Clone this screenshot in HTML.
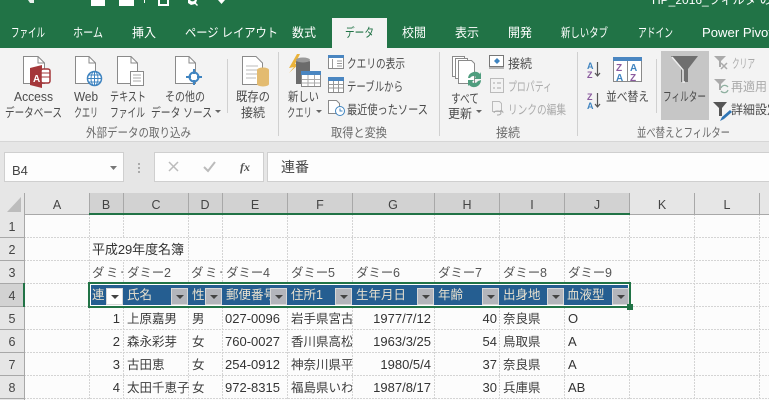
<!DOCTYPE html>
<html><head><meta charset="utf-8"><style>
html,body{margin:0;padding:0;background:#e6e6e6;overflow:hidden}
svg{display:block}
text{font-family:"Liberation Sans","Noto Sans CJK JP",sans-serif;font-size:12.5px;fill:#444}
.tab{fill:#fff}
.rl{fill:#4a4a4a}
.dis{fill:#aaa}
.grp{fill:#6a6a6a}
.hd{fill:#444;text-anchor:middle;font-size:12.5px}
.c{font-size:13px;fill:#333}
.j{font-size:12.500px;fill:#3c3c3c}
.r{font-size:13px;fill:#333;text-anchor:end}
.th{font-size:12.500px;fill:#e9e1cf}
.d{font-size:12.500px;fill:#555}
.doc{fill:#fff;stroke:#8a8a8a;stroke-width:1}
</style></head><body>
<svg width="769" height="400" viewBox="0 0 769 400" xmlns="http://www.w3.org/2000/svg">
<rect width="769" height="400" fill="#e6e6e6"/>
<!-- title -->
<rect width="769" height="48" fill="#217346"/>
<text x="652" y="4" style="fill:#fff;font-size:12px">HP_2016_フィルタ の設</text>
<g fill="#fff">
<path d="M28 0l2 3 4 0 0-3z" opacity=".9"/>
<rect x="91" y="0" width="14" height="6"/><rect x="119" y="0" width="15" height="6"/>
<path d="M158 0v6h11V0h-2v4h-7V0z"/><rect x="144" y="0" width="1" height="3"/>
<path d="M188 0v3l3 2 4-1 2 2 1-1-2-2 1-3h-2a3 3 0 0 1-5 0z"/>
<path d="M218 0h7l-3.500 4z"/>
</g>
<!-- tabs -->
<g lengthAdjust="spacingAndGlyphs">
<text class="tab" x="11" y="37" textLength="34" lengthAdjust="spacingAndGlyphs">ファイル</text>
<text class="tab" x="73" y="37" textLength="30" lengthAdjust="spacingAndGlyphs">ホーム</text>
<text class="tab" x="132" y="37" textLength="24" lengthAdjust="spacingAndGlyphs">挿入</text>
<text class="tab" x="185" y="37" textLength="93" lengthAdjust="spacingAndGlyphs">ページ レイアウト</text>
<text class="tab" x="292" y="37" textLength="24" lengthAdjust="spacingAndGlyphs">数式</text>
<rect x="332" y="18" width="55" height="30" fill="#f3f3f3"/>
<text class="tab" x="345" y="37" textLength="29" lengthAdjust="spacingAndGlyphs" style="fill:#217346">データ</text>
<text class="tab" x="402" y="37" textLength="24" lengthAdjust="spacingAndGlyphs">校閲</text>
<text class="tab" x="455" y="37" textLength="24" lengthAdjust="spacingAndGlyphs">表示</text>
<text class="tab" x="508" y="37" textLength="24" lengthAdjust="spacingAndGlyphs">開発</text>
<text class="tab" x="561" y="37" textLength="47" lengthAdjust="spacingAndGlyphs">新しいタブ</text>
<text class="tab" x="638" y="37" textLength="35" lengthAdjust="spacingAndGlyphs">アドイン</text>
<text class="tab" x="702" y="37" textLength="70" lengthAdjust="spacingAndGlyphs">Power Pivot</text>
</g>
<!-- ribbon -->
<rect y="48" width="769" height="93" fill="#f3f3f3"/>
<rect y="141" width="769" height="1" fill="#d6d6d6"/>
<g stroke="#d0d0d0" fill="none">
<path d="M227.500 59V113M278.500 52V136M439.500 52V136M577.500 52V136M656.500 59V113"/>
</g>
<!-- Access -->
<path class="doc" d="M23.500 56.500H38l6.500 6.500V83.500H23.500z"/><path d="M38 56.500v6.500h6.500" fill="none" stroke="#8a8a8a"/>
<path d="M30 68l12-3V88l-12-3z" fill="#a4373a"/><rect x="41" y="69" width="9" height="14" rx="2" fill="#fff" stroke="#a4373a" stroke-width="1.500"/>
<path d="M41 73h9M41 77h9" stroke="#a4373a"/>
<text x="33" y="82" style="font-size:10px;font-weight:bold;fill:#fff">A</text>
<text class="rl" x="14" y="101" textLength="39" lengthAdjust="spacingAndGlyphs">Access</text><text class="rl" x="5" y="117" textLength="57" lengthAdjust="spacingAndGlyphs">データベース</text>
<!-- Web -->
<path class="doc" d="M75.500 56.500H89l6.500 6.500V83.500H75.500z"/><path d="M89 56.500v6.500h6.500" fill="none" stroke="#8a8a8a"/>
<circle cx="94.500" cy="78.500" r="7" fill="#fff" stroke="#3f84c0" stroke-width="1.500"/>
<path d="M87.500 78.500h14M88.500 75h12M88.500 82h12M94.500 71.500v14" stroke="#3f84c0"/><ellipse cx="94.500" cy="78.500" rx="3.500" ry="7" fill="none" stroke="#3f84c0"/>
<text class="rl" x="74" y="101" textLength="24" lengthAdjust="spacingAndGlyphs">Web</text><text class="rl" x="74" y="117" textLength="24" lengthAdjust="spacingAndGlyphs">クエリ</text>
<!-- Text -->
<path class="doc" d="M117.500 56.500H131l6.500 6.500V83.500H117.500z"/><path d="M131 56.500v6.500h6.500" fill="none" stroke="#8a8a8a"/>
<rect x="130.500" y="71.500" width="13" height="14" fill="#fff" stroke="#8a8a8a"/><path d="M133 75h8M133 78h8M133 81h8" stroke="#aaa"/>
<text class="rl" x="110" y="101" textLength="36" lengthAdjust="spacingAndGlyphs">テキスト</text><text class="rl" x="110" y="117" textLength="35" lengthAdjust="spacingAndGlyphs">ファイル</text>
<!-- Other -->
<path class="doc" d="M175.500 56.500H189l6.500 6.500V83.500H175.500z"/><path d="M189 56.500v6.500h6.500" fill="none" stroke="#8a8a8a"/>
<circle cx="194" cy="77" r="4.500" fill="#fff" stroke="#3f84c0" stroke-width="2"/><path d="M186 77h5M197 77h5M194 69v5M194 80v5" stroke="#3f84c0" stroke-width="2"/>
<text class="rl" x="165" y="101" textLength="40" lengthAdjust="spacingAndGlyphs">その他の</text><text class="rl" x="151" y="117" textLength="61" lengthAdjust="spacingAndGlyphs">データ ソース</text>
<path d="M215 110h6l-3 3z" fill="#666"/>
<!-- 既存 -->
<path class="doc" d="M242.500 56.500H256l6.500 6.500V84.500H242.500z"/><path d="M246 66h12M246 70h12M246 74h12M246 78h10" stroke="#bbb"/>
<path d="M257 70a6 2.500 0 0 1 12 0V84a6 2.500 0 0 1-12 0z" fill="#e3bb70"/>
<text class="rl" x="236" y="101" textLength="34" lengthAdjust="spacingAndGlyphs">既存の</text><text class="rl" x="241" y="117" textLength="24" lengthAdjust="spacingAndGlyphs">接続</text>
<text class="grp" x="86" y="137" textLength="105" lengthAdjust="spacingAndGlyphs">外部データの取り込み</text>
<!-- 新しいクエリ -->
<path d="M297 54l-8 14 5-1-5 6 11-10-5 1 5-10z" fill="#eab33a"/>
<path d="M296 62a7 3 0 0 1 14 0V84H296z" fill="#6b6b6b"/><ellipse cx="303" cy="60" rx="7" ry="2.500" fill="#9a9a9a"/>
<rect x="301.500" y="71.500" width="19" height="15" fill="#fff" stroke="#8a8a8a"/><rect x="301" y="71" width="20" height="4" fill="#4a86c1"/><path d="M308 75v11M314.500 75v11M302 79.500h18M302 83h18" stroke="#aaa"/>
<text class="rl" x="288" y="101" textLength="31" lengthAdjust="spacingAndGlyphs">新しい</text><text class="rl" x="287" y="117" textLength="25" lengthAdjust="spacingAndGlyphs">クエリ</text>
<path d="M316 110h6l-3 3z" fill="#666"/>
<rect x="328.500" y="55.500" width="15" height="13" fill="#fff" stroke="#8a8a8a"/><rect x="328" y="55" width="16" height="3" fill="#4a86c1"/><path d="M337 61h5M337 63.500h5M337 66h5M332.500 59v9" stroke="#999"/>
<text class="rl" x="347" y="68" textLength="58" lengthAdjust="spacingAndGlyphs">クエリの表示</text>
<rect x="328.500" y="78.500" width="15" height="14" fill="#fff" stroke="#8a8a8a"/><rect x="328" y="77" width="16" height="4" fill="#4a86c1"/><path d="M333.500 81v11M338.500 81v11M329 84.500h14M329 88h14" stroke="#999"/>
<text class="rl" x="347" y="91" textLength="56" lengthAdjust="spacingAndGlyphs">テーブルから</text>
<path d="M328.500 100.500h8l3 3v10h-11z" fill="#fff" stroke="#8a8a8a"/><circle cx="340" cy="111" r="4.500" fill="#fff" stroke="#3f84c0"/><path d="M340 108.500v2.500h2.500" fill="none" stroke="#3f84c0"/>
<text class="rl" x="347" y="114" textLength="81" lengthAdjust="spacingAndGlyphs">最近使ったソース</text>
<text class="grp" x="331" y="137" textLength="56" lengthAdjust="spacingAndGlyphs">取得と変換</text>
<!-- 更新 -->
<path d="M452.500 56.500h12v20h-12z" fill="#fff" stroke="#8a8a8a"/><path d="M455.500 58.500h12v20h-12z" fill="#fff" stroke="#8a8a8a"/><path d="M458.500 60.500h13l3 3v20h-16z" fill="#fff" stroke="#8a8a8a"/>
<path d="M468 78a7 7 0 0 1 12-4l1-2v7h-7l2-2a4 4 0 0 0-6 1zM481 80a7 7 0 0 1-12 5l-1 1v-6h6l-2 2a4 4 0 0 0 6-1z" fill="#4f9d7e"/>
<text class="rl" x="451" y="103" textLength="28" lengthAdjust="spacingAndGlyphs">すべて</text><text class="rl" x="448" y="118" textLength="24" lengthAdjust="spacingAndGlyphs">更新</text>
<path d="M476 110h6l-3 3z" fill="#666"/>
<rect x="489.500" y="55.500" width="14" height="11" fill="#fff" stroke="#777"/><path d="M497 58l3 3-3 3-3-3z" fill="#3f84c0"/><path d="M489 68h15" stroke="#777"/>
<text class="rl" x="508" y="68" textLength="24" lengthAdjust="spacingAndGlyphs">接続</text>
<rect x="490.500" y="78.500" width="13" height="14" fill="#f3f3f3" stroke="#bbb"/><path d="M493 83h2M493 88h2M497 83h4M497 88h4" stroke="#aaa"/>
<text x="508" y="91" textLength="44" lengthAdjust="spacingAndGlyphs" style="fill:#aaa">プロパティ</text>
<path d="M492.500 101.500h7l2 2v8h-9z" fill="#f3f3f3" stroke="#bbb"/><path d="M494 113a3 2 0 0 1 3-2h1a3 2 0 0 1 0 4h-1M503 113a2 2 0 0 0-3-2" fill="none" stroke="#aaa"/>
<text x="508" y="114" textLength="58" lengthAdjust="spacingAndGlyphs" style="fill:#aaa">リンクの編集</text>
<text class="grp" x="496" y="137" textLength="24" lengthAdjust="spacingAndGlyphs">接続</text>
<!-- sort -->
<text x="587" y="69" style="font-size:9px;font-weight:bold;fill:#3f84c0">A</text><text x="587" y="78" style="font-size:9px;font-weight:bold;fill:#8a5a9e">Z</text>
<path d="M597.500 62v14M595 73l2.500 3 2.500-3" stroke="#555" fill="none" stroke-width="1.200"/>
<text x="587" y="100" style="font-size:9px;font-weight:bold;fill:#8a5a9e">Z</text><text x="587" y="109" style="font-size:9px;font-weight:bold;fill:#3f84c0">A</text>
<path d="M597.500 93v14M595 104l2.500 3 2.500-3" stroke="#555" fill="none" stroke-width="1.200"/>
<rect x="613.500" y="57.500" width="28" height="24" fill="#fff" stroke="#8a8a8a"/><rect x="613" y="57" width="29" height="4" fill="#4a86c1"/><path d="M627.500 61v20" stroke="#8a8a8a"/>
<text x="616" y="71" style="font-size:10px;font-weight:bold;fill:#8a5a9e">Z</text><text x="616" y="81" style="font-size:10px;font-weight:bold;fill:#3f84c0">A</text>
<text x="630" y="71" style="font-size:10px;font-weight:bold;fill:#3f84c0">A</text><text x="630" y="81" style="font-size:10px;font-weight:bold;fill:#8a5a9e">Z</text>
<text class="rl" x="606" y="101" textLength="43" lengthAdjust="spacingAndGlyphs">並べ替え</text>
<rect x="661" y="51" width="48" height="69" fill="#c6c6c6"/>
<path d="M671 56h27l-10 13v13h-7V69z" fill="#6f6f6f"/><path d="M672 57l11 13v12h2" fill="none" stroke="#eee" stroke-width="1.500"/>
<text class="rl" x="663" y="101" textLength="43" lengthAdjust="spacingAndGlyphs">フィルター</text>
<path d="M714 56h12l-5 5v6h-2v-6z" fill="#aaa"/><path d="M721 63l6 6M727 63l-6 6" stroke="#aaa" stroke-width="1.500"/>
<text x="732" y="68" textLength="23" lengthAdjust="spacingAndGlyphs" style="fill:#aaa">クリア</text>
<path d="M714 79h12l-5 5v6h-2v-6z" fill="#aaa"/><path d="M721 88a4 4 0 0 1 7-1M728 90a4 4 0 0 1-7 1" fill="none" stroke="#8fb0a0" stroke-width="1.300"/>
<text x="731" y="91" textLength="36" lengthAdjust="spacingAndGlyphs" style="fill:#aaa">再適用</text>
<path d="M713 102h14l-5 6v8h-3v-8z" fill="#555"/><path d="M720 121l2-4 8-7 2 2-8 7z" fill="#2f75b5"/>
<text class="rl" x="731" y="114" textLength="48" lengthAdjust="spacingAndGlyphs">詳細設定</text>
<text class="grp" x="637" y="137" textLength="93" lengthAdjust="spacingAndGlyphs">並べ替えとフィルター</text>
<!-- formula bar -->
<rect x="4.500" y="152.500" width="119" height="29" fill="#fdfdfd" stroke="#cfcfcf"/>
<text x="12" y="175" style="font-size:13px;fill:#444">B4</text>
<path d="M110 166h7l-3.500 4z" fill="#777"/>
<g fill="#aaa"><rect x="138" y="163" width="2" height="2"/><rect x="138" y="167" width="2" height="2"/><rect x="138" y="171" width="2" height="2"/></g>
<rect x="154.500" y="152.500" width="109" height="29" fill="#fdfdfd" stroke="#cfcfcf"/>
<path d="M169 162l9 9M178 162l-9 9" stroke="#bbb" stroke-width="1.500"/>
<path d="M204 167l4 4 7-9" stroke="#bbb" stroke-width="2" fill="none"/>
<text x="240" y="171" style="font-family:'Liberation Serif',serif;font-style:italic;font-weight:bold;font-size:12px;fill:#555">fx</text>
<rect x="267.500" y="152.500" width="502" height="29" fill="#fdfdfd" stroke="#cfcfcf"/>
<text x="281" y="172" style="font-size:14px;fill:#444">連番</text>
<!-- sheet -->
<rect x="24" y="214" width="745" height="186" fill="#fcfcfc"/>
<rect x="0" y="193" width="769" height="21" fill="#e6e6e6"/>
<rect x="89" y="193" width="540" height="21" fill="#d2d2d2"/>
<rect x="0" y="214" width="24" height="186" fill="#e6e6e6"/>
<rect x="0" y="283" width="24" height="23" fill="#d2d2d2"/>
<path d="M21 197v15H7z" fill="#bcbcbc"/>
<g stroke="#d4d4d4" fill="none" stroke-dasharray="2 1">
<path d="M24 237.500H769M24 260.500H769M24 283.500H769M24 306.500H769M24 329.500H769M24 352.500H769M24 375.500H769M24 398.500H769"/>
<path d="M89.500 214V400M123.500 214V400M188.500 214V400M222.500 214V400M287.500 214V400M352.500 214V400M434.500 214V400M499.500 214V400M564.500 214V400M629.500 214V400M694.500 214V400M759.500 214V400"/>
</g>
<rect x="90" y="238" width="98" height="22" fill="#fcfcfc"/>
<g stroke="#a8a8a8" fill="none">
<path d="M24.500 193V400M89.500 193V214M123.500 193V214M188.500 193V214M222.500 193V214M287.500 193V214M352.500 193V214M434.500 193V214M499.500 193V214M564.500 193V214M629.500 193V214M694.500 193V214M759.500 193V214"/>
<path d="M0 237.500H24M0 260.500H24M0 283.500H24M0 306.500H24M0 329.500H24M0 352.500H24M0 375.500H24M0 398.500H24M24 214.500H769" />
</g>
<rect x="89" y="213" width="541" height="2" fill="#217346"/>
<rect x="23" y="283" width="2" height="24" fill="#217346"/>
<text class="hd" x="57" y="209">A</text><text class="hd" x="106" y="209">B</text><text class="hd" x="156" y="209">C</text><text class="hd" x="205" y="209">D</text><text class="hd" x="255" y="209">E</text><text class="hd" x="320" y="209">F</text><text class="hd" x="393" y="209">G</text><text class="hd" x="467" y="209">H</text><text class="hd" x="532" y="209">I</text><text class="hd" x="597" y="209">J</text><text class="hd" x="662" y="209">K</text><text class="hd" x="727" y="209">L</text>
<text class="hd" x="12" y="231">1</text><text class="hd" x="12" y="254">2</text><text class="hd" x="12" y="277">3</text><text class="hd" x="12" y="300">4</text><text class="hd" x="12" y="323">5</text><text class="hd" x="12" y="346">6</text><text class="hd" x="12" y="369">7</text><text class="hd" x="12" y="392">8</text>
<text class="c" x="92" y="254" textLength="92">平成29年度名簿</text>
<!-- row 3 -->
<svg x="89" y="261" width="34" height="22"><text class="d" x="3" y="16" letter-spacing="1.500">ダミー1</text></svg>
<text class="d" x="127" y="277" textLength="44">ダミー2</text>
<svg x="188" y="261" width="34" height="22"><text class="d" x="3" y="16" letter-spacing="1.500">ダミー3</text></svg>
<text class="d" x="226" y="277" textLength="44">ダミー4</text>
<text class="d" x="291" y="277" textLength="44">ダミー5</text>
<text class="d" x="356" y="277" textLength="44">ダミー6</text>
<text class="d" x="438" y="277" textLength="44">ダミー7</text>
<text class="d" x="503" y="277" textLength="44">ダミー8</text>
<text class="d" x="568" y="277" textLength="44">ダミー9</text>
<!-- table header -->
<rect x="88" y="282" width="543" height="26" fill="#217346"/>
<rect x="90" y="284" width="539" height="22" fill="#fff"/>
<rect x="91" y="285" width="537" height="20" fill="#255e91"/>
<text class="th" x="92" y="299">連</text><text class="th" x="127" y="299">氏名</text><text class="th" x="192" y="299">性</text>
<svg x="222" y="285" width="50" height="20"><text class="th" x="4" y="14">郵便番号</text></svg>
<text class="th" x="291" y="299">住所1</text><text class="th" x="356" y="299">生年月日</text><text class="th" x="438" y="299">年齢</text><text class="th" x="503" y="299">出身地</text><text class="th" x="567" y="299">血液型</text>
<g fill="#b3b5bb" stroke="#d8d8d8">
<rect x="106.500" y="288.500" width="16" height="16" fill="#fff"/>
<rect x="171.500" y="288.500" width="16" height="16"/><rect x="205.500" y="288.500" width="16" height="16"/><rect x="270.500" y="288.500" width="16" height="16"/><rect x="335.500" y="288.500" width="16" height="16"/><rect x="417.500" y="288.500" width="16" height="16"/><rect x="482.500" y="288.500" width="16" height="16"/><rect x="547.500" y="288.500" width="16" height="16"/><rect x="612.500" y="288.500" width="16" height="16"/>
</g>
<g fill="#444"><path d="M111 295h8l-4 4z"/><path d="M176 295h8l-4 4z"/><path d="M210 295h8l-4 4z"/><path d="M275 295h8l-4 4z"/><path d="M340 295h8l-4 4z"/><path d="M422 295h8l-4 4z"/><path d="M487 295h8l-4 4z"/><path d="M552 295h8l-4 4z"/><path d="M617 295h8l-4 4z"/></g>
<rect x="627" y="304" width="6" height="6" fill="#217346"/>
<!-- rows -->
<text class="r" x="120" y="323">1</text><text class="j" x="127" y="323">上原嘉男</text><text class="j" x="192" y="323">男</text><text class="c" x="225" y="323">027-0096</text>
<svg x="288" y="307" width="64" height="22"><text class="j" x="3" y="16">岩手県宮古市</text></svg>
<text class="r" x="431" y="323">1977/7/12</text><text class="r" x="497" y="323">40</text><text class="j" x="503" y="323">奈良県</text><text class="c" x="568" y="323">O</text>
<text class="r" x="120" y="346">2</text><text class="j" x="127" y="346">森永彩芽</text><text class="j" x="192" y="346">女</text><text class="c" x="225" y="346">760-0027</text>
<svg x="288" y="330" width="64" height="22"><text class="j" x="3" y="16">香川県高松市</text></svg>
<text class="r" x="431" y="346">1963/3/25</text><text class="r" x="497" y="346">54</text><text class="j" x="503" y="346">鳥取県</text><text class="c" x="568" y="346">A</text>
<text class="r" x="120" y="369">3</text><text class="j" x="127" y="369">古田恵</text><text class="j" x="192" y="369">女</text><text class="c" x="225" y="369">254-0912</text>
<svg x="288" y="353" width="64" height="22"><text class="j" x="3" y="16">神奈川県平塚市</text></svg>
<text class="r" x="431" y="369">1980/5/4</text><text class="r" x="497" y="369">37</text><text class="j" x="503" y="369">奈良県</text><text class="c" x="568" y="369">A</text>
<text class="r" x="120" y="392">4</text><text class="j" x="127" y="392">太田千恵子</text><text class="j" x="192" y="392">女</text><text class="c" x="225" y="392">972-8315</text>
<svg x="288" y="376" width="64" height="22"><text class="j" x="3" y="16">福島県いわき市</text></svg>
<text class="r" x="431" y="392">1987/8/17</text><text class="r" x="497" y="392">30</text><text class="j" x="503" y="392">兵庫県</text><text class="c" x="568" y="392">AB</text>
</svg>
</body></html>
